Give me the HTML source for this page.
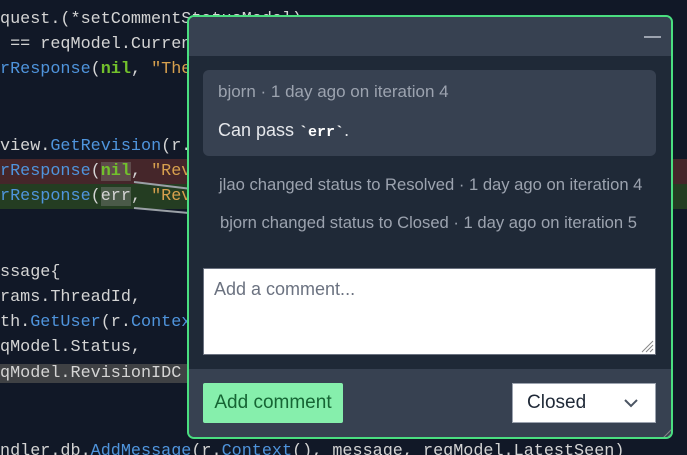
<!DOCTYPE html>
<html><head><style>
*{margin:0;padding:0;box-sizing:border-box}
html,body{width:687px;height:455px;overflow:hidden}
body{background:#111827;position:relative;font-family:"Liberation Sans",sans-serif}
.code{position:absolute;left:0;top:0;width:687px;height:455px;overflow:hidden;font-family:"Liberation Mono",monospace;font-size:16.8px;color:#d4d4d4;white-space:pre}
.ln{position:absolute;left:0;height:25.2px;line-height:25.2px;width:687px}
.b{color:#4f94dc}.g{color:#72c02c;font-weight:bold}.s{color:#d7a04e}
.panel{position:absolute;left:187px;top:15px;width:486px;height:424px;border:2px solid #4ade80;border-radius:7px;background:#1f2937;overflow:hidden}
.hdr{height:39px;background:#374151;position:relative}
.dash{position:absolute;left:455px;top:19px;width:17px;height:2px;background:#9ca3af}
.card{position:absolute;left:14px;top:53px;width:453px;height:86px;background:#374151;border-radius:6px}
.meta{position:absolute;left:15px;top:12px;font-size:17px;color:#9ca3af}
.msg{position:absolute;left:15px;top:50px;font-size:18px;color:#e5e7eb}
.msg b{font-family:"Liberation Mono",monospace;font-size:15px;color:#fff}
.ev{position:absolute;font-size:16.6px;color:#9ca3af}
.ta{position:absolute;left:14px;top:251px;width:453px;height:87px;background:#fff;border:1px solid #6b7280}
.ta span{position:absolute;left:10px;top:10px;font-size:18px;color:#6b7280}
.foot{position:absolute;left:0;top:352px;width:486px;height:72px;background:#374151}
.btn{position:absolute;left:14px;top:14px;width:140px;height:40px;background:#86efac;border-radius:2px;font-size:19px;color:#166534;line-height:40px;text-align:center}
.sel{position:absolute;left:323px;top:14px;width:144px;height:40px;background:#fff;border:1px solid #9ca3af;font-size:19px;color:#1f2937;line-height:38px;padding-left:14px}
</style></head><body>
<div class="code">
<div class="ln" style="top:7px">quest.(*setCommentStatusModel)</div>
<div class="ln" style="top:32px"> == reqModel.CurrentStatus {</div>
<div class="ln" style="top:57px"><span class="b">rResponse</span>(<span class="g">nil</span>, <span class="s">"The status</span></div>
<div class="ln" style="top:134px">view.<span class="b">GetRevision</span>(r.Context</div>
<div class="ln" style="top:159px;background:#45262a"><span class="b">rResponse</span>(<span style="background:#5e4b4b"><span class="g">nil</span></span>, <span class="s">"Revision not found"</span>)</div>
<div class="ln" style="top:184px;background:#243d22"><span class="b">rResponse</span>(<span style="background:#4a5a48">err</span>, <span class="s">"Revision not found"</span>)</div>
<div class="ln" style="top:260px">ssage{</div>
<div class="ln" style="top:285px">rams.ThreadId,</div>
<div class="ln" style="top:310px">th.<span class="b">GetUser</span>(r.<span class="b">Context</span>()),</div>
<div class="ln" style="top:335px">qModel.Status,</div>
<div class="ln" style="top:361px"><span style="background:#3f4144">qModel.RevisionIDC                 </span></div>
<div class="ln" style="top:439px">ndler.db.<span class="b">AddMessage</span>(r.<span class="b">Context</span>(), message, reqModel.LatestSeen)</div>
</div>
<svg style="position:absolute;left:0;top:0" width="687" height="455"><path d="M134 182 L200 190 M134 208 L200 214" stroke="#9aa0a6" stroke-width="2" fill="none"/></svg>
<div class="panel">
<div class="hdr"><div class="dash"></div></div>
<div class="card"><div class="meta">bjorn · 1 day ago on iteration 4</div><div class="msg">Can pass <b>`err`</b>.</div></div>
<div class="ev" style="left:30px;top:158px">jlao changed status to Resolved · 1 day ago on iteration 4</div>
<div class="ev" style="left:31px;top:196px">bjorn changed status to Closed · 1 day ago on iteration 5</div>
<div class="ta"><span>Add a comment...</span>
<svg style="position:absolute;right:1px;bottom:1px" width="14" height="14"><path d="M13 2L2 13M13 6L6 13M13 10L10 13" stroke="#888" stroke-width="1"/></svg></div>
<div class="foot"><div class="btn">Add comment</div>
<div class="sel">Closed<svg style="position:absolute;right:17px;top:15px" width="14" height="9"><path d="M1 1L7 7L13 1" stroke="#4b5563" stroke-width="2" fill="none"/></svg></div>
<svg style="position:absolute;right:1px;bottom:1px" width="14" height="14"><path d="M13 2L2 13M13 6L6 13M13 10L10 13" stroke="#888" stroke-width="1"/></svg>
</div>
</div>
</body></html>
